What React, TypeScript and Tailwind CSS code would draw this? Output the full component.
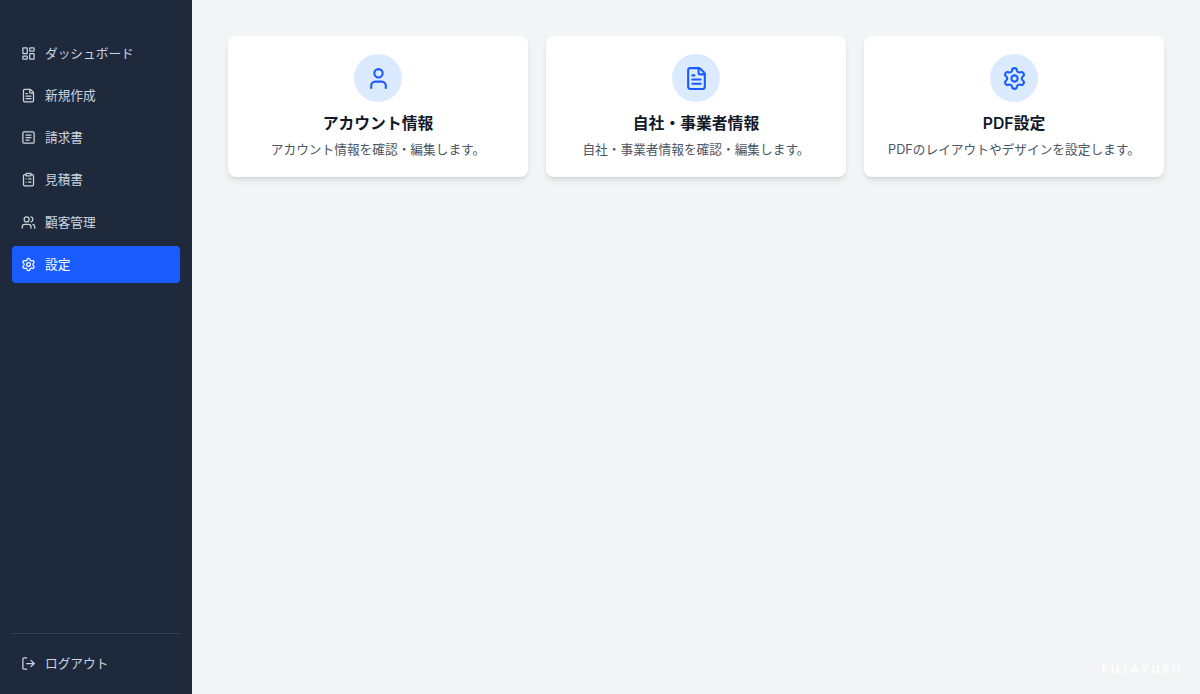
import { User, FileText, Settings, Users, LogOut, ClipboardList } from "lucide-react";

const font = { fontFamily: '"Inter", "Noto Sans CJK JP", sans-serif' };

function Grid4() {
  return (
    <svg width="15" height="15" viewBox="0 0 24 24" fill="none" stroke="currentColor" strokeWidth="2" strokeLinecap="round" strokeLinejoin="round">
      <rect x="3" y="3" width="7" height="9" rx="1" />
      <rect x="14" y="3" width="7" height="5" rx="1" />
      <rect x="14" y="12" width="7" height="9" rx="1" />
      <rect x="3" y="16" width="7" height="5" rx="1" />
    </svg>
  );
}

function Lines() {
  return (
    <svg width="15" height="15" viewBox="0 0 24 24" fill="none" stroke="currentColor" strokeWidth="2" strokeLinecap="round" strokeLinejoin="round">
      <rect x="3" y="3" width="18" height="18" rx="2" />
      <path d="M8 8h8M8 12h8M8 16h5" />
    </svg>
  );
}

const items = [
  { label: "ダッシュボード", icon: <Grid4 /> },
  { label: "新規作成", icon: <FileText size={15} /> },
  { label: "請求書", icon: <Lines /> },
  { label: "見積書", icon: <ClipboardList size={15} /> },
  { label: "顧客管理", icon: <Users size={15} /> },
  { label: "設定", icon: <Settings size={15} />, active: true },
];

const cards = [
  { title: "アカウント情報", desc: "アカウント情報を確認・編集します。", icon: <User size={25} strokeWidth={2} /> },
  { title: "自社・事業者情報", desc: "自社・事業者情報を確認・編集します。", icon: <FileText size={25} strokeWidth={2} /> },
  { title: "PDF設定", desc: "PDFのレイアウトやデザインを設定します。", icon: <Settings size={25} strokeWidth={2} /> },
];

export default function App() {
  return (
    <div className="flex h-[694px] w-[1200px] overflow-hidden bg-[#f3f4f6] relative" style={font}>
      <aside className="flex w-[192px] shrink-0 flex-col bg-[#1e293b] px-3 pt-[35px] pb-[12px]">
        <nav className="flex flex-col gap-[5.6px]">
          {items.map((it) => (
            <div
              key={it.label}
              className={`flex h-[36.6px] items-center gap-[9px] rounded-[4px] px-[9px] text-[12.7px] ${
                it.active ? "bg-[#1a5cff] text-white" : "text-[#cbd5e1]"
              }`}
            >
              <span className="flex w-[15px] justify-center">{it.icon}</span>
              <span>{it.label}</span>
            </div>
          ))}
        </nav>
        <div className="mt-auto border-t border-[#334155] pt-[11px]">
          <div className="flex h-[36.6px] items-center gap-[9px] px-[9px] text-[12.7px] text-[#cbd5e1]">
            <span className="flex w-[15px] justify-center"><LogOut size={15} /></span>
            <span>ログアウト</span>
          </div>
        </div>
      </aside>
      <main className="flex-1 px-[36px] pt-[36px]">
        <div className="grid grid-cols-3 gap-[18px]">
          {cards.map((c) => (
            <div key={c.title} className="flex h-[141px] flex-col items-center rounded-[8px] bg-white pt-[18px] shadow-md">
              <div className="flex h-[48px] w-[48px] items-center justify-center rounded-full bg-[#dbeafe] text-[#1a5cff]">
                {c.icon}
              </div>
              <div className="mt-[10px] text-[15.8px] font-semibold leading-[24px] text-[#111827]">{c.title}</div>
              <div className="mt-[4px] text-[12.7px] leading-[19px] text-[#4b5563]">{c.desc}</div>
            </div>
          ))}
        </div>
      </main>
      <div className="absolute bottom-[17px] right-[17px] text-[11px] font-semibold tracking-[0.25em] text-white">FUTAYURU</div>
    </div>
  );
}
